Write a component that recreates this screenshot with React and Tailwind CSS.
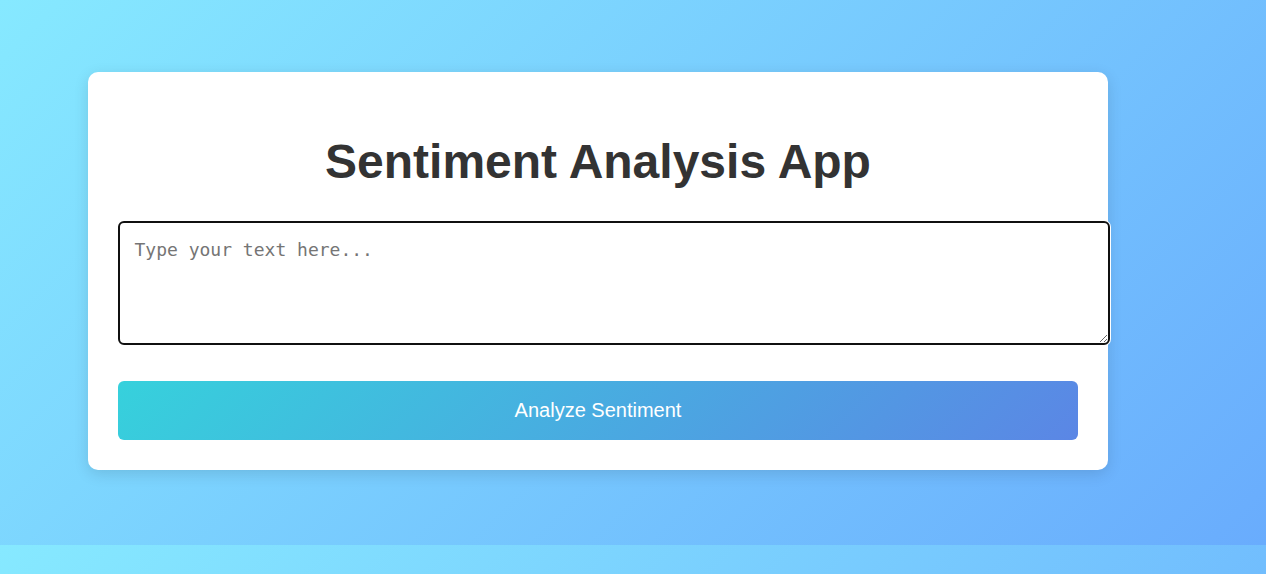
export default function App() {
  return (
    <div className="h-[574px] w-full overflow-hidden bg-[linear-gradient(135deg,#86e9ff_0%,#69acfd_100%)] bg-[length:100%_545px] bg-repeat-y font-['Liberation_Sans',Arial,sans-serif]">
      <div className="pt-[72px] pl-[88px]">
        <div className="w-[1020px] rounded-[10px] bg-white px-[30px] pt-[30px] pb-[30px] shadow-[0_4px_15px_rgba(0,0,0,0.12)]">
          <h1 className="my-[32px] text-center text-[48px] font-bold leading-[55px] text-[#333333]">
            Sentiment Analysis App
          </h1>
          <textarea
            className="box-border block h-[124px] w-[992px] resize-y rounded-[6px] border-[2.5px] border-[#101010] bg-white px-[14.5px] pt-[15px] font-['DejaVu_Sans_Mono',monospace] text-[18px] leading-[24px] text-[#333] placeholder:text-[#757575] shadow-[0_0_0_1px_#ffffff] outline-none"
            placeholder="Type your text here..."
          />
          <button className="mt-[36px] block h-[59px] w-[960px] rounded-[6px] bg-[linear-gradient(135deg,#36d1dc,#5b86e5)] pb-[2px] text-[20px] text-white">
            Analyze Sentiment
          </button>
        </div>
      </div>
    </div>
  );
}
